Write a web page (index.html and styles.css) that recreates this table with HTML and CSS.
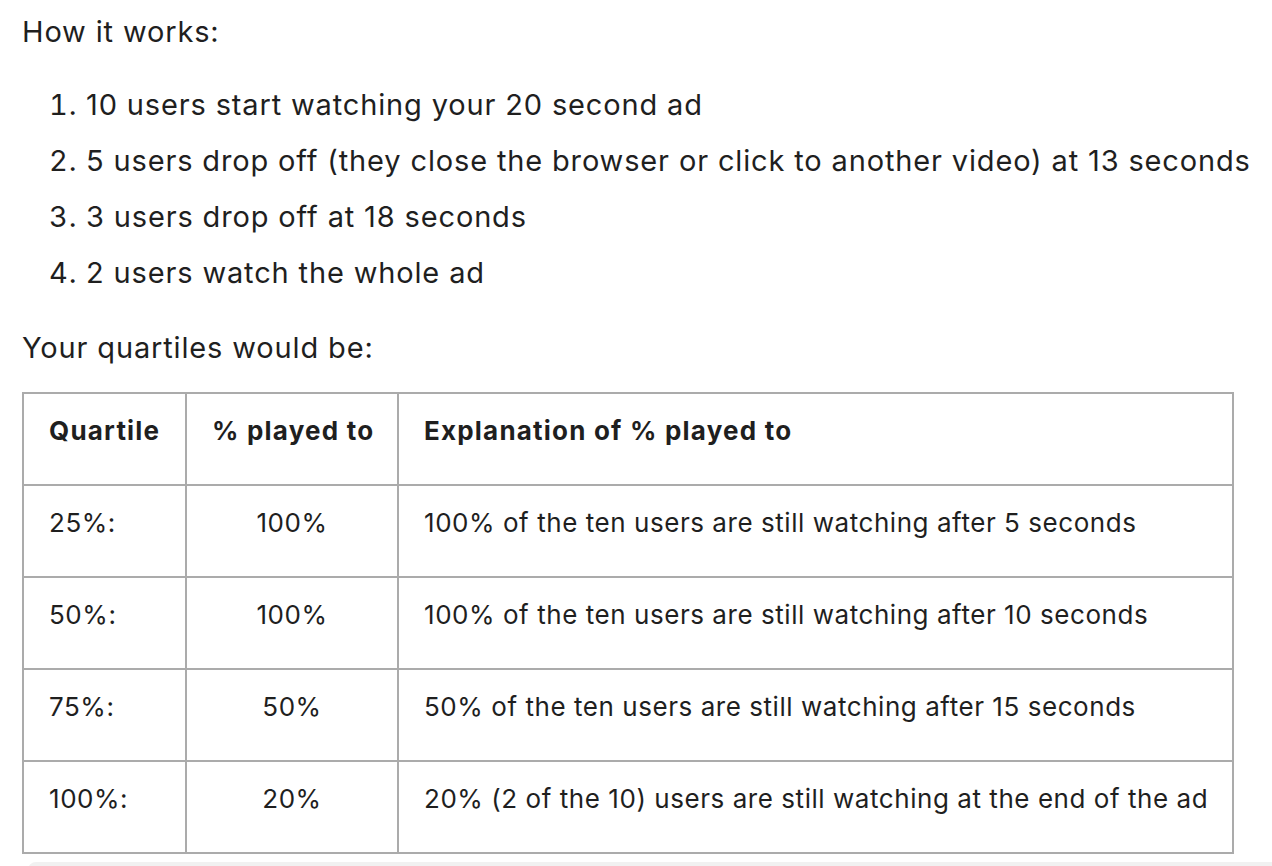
FILE: index.html
```html
<!DOCTYPE html>
<html>
<head>
<meta charset="utf-8">
<link rel="stylesheet" href="styles.css">
</head>
<body>
<div class="doc">
  <p class="para">How it works:</p>
  <ol class="steps">
    <li>10 users start watching your 20 second ad</li>
    <li>5 users drop off (they close the browser or click to another video) at 13 seconds</li>
    <li>3 users drop off at 18 seconds</li>
    <li>2 users watch the whole ad</li>
  </ol>
  <p class="para">Your quartiles would be:</p>
  <table class="qt">
    <thead>
      <tr><th class="c1">Quartile</th><th class="c2">% played to</th><th class="c3">Explanation of % played to</th></tr>
    </thead>
    <tbody>
      <tr><td class="c1">25%:</td><td class="c2 mid">100%</td><td class="c3">100% of the ten users are still watching after 5 seconds</td></tr>
      <tr><td class="c1">50%:</td><td class="c2 mid">100%</td><td class="c3">100% of the ten users are still watching after 10 seconds</td></tr>
      <tr><td class="c1">75%:</td><td class="c2 mid">50%</td><td class="c3">50% of the ten users are still watching after 15 seconds</td></tr>
      <tr><td class="c1">100%:</td><td class="c2 mid">20%</td><td class="c3">20% (2 of the 10) users are still watching at the end of the ad</td></tr>
    </tbody>
  </table>
  <div class="next"></div>
</div>
</body>
</html>
```
FILE: styles.css
```css
html, body { margin: 0; padding: 0; background: #fff; }
body {
  font-family: Inter, Roboto, "Liberation Sans", sans-serif;
  color: #1f1f1f;
  font-size: 29px;
  letter-spacing: 0.85px;
  overflow: hidden;
  height: 866px;
}
.doc { padding: 12px 0 0 22px; }
.para { margin: 0; line-height: 40px; white-space: nowrap; }
.steps { margin: 33px 0 35px 0; padding-left: 64px; }
.steps li { line-height: 40px; margin-bottom: 16px; white-space: nowrap; }
.steps li:last-child { margin-bottom: 0; }
.qt {
  border-collapse: collapse;
  table-layout: fixed;
  margin-top: 24px;
  width: 1212px;
  font-size: 26px;
  letter-spacing: 0.55px;
}
.qt th, .qt td {
  border: 2px solid #ababab;
  text-align: left;
  vertical-align: top;
  padding: 20px 0 0 25px;
  height: 70px;
  line-height: 34px;
  white-space: nowrap;
}
.qt th { font-weight: 700; letter-spacing: 1.2px; }
.c1 { width: 136px; }
.c2 { width: 185px; }
.qt .mid { text-align: center; padding-left: 0; }
.next {
  margin: 8px 0 0 6px;
  height: 20px;
  background: #f1f1f1;
  border-radius: 8px 0 0 0;
}
```
